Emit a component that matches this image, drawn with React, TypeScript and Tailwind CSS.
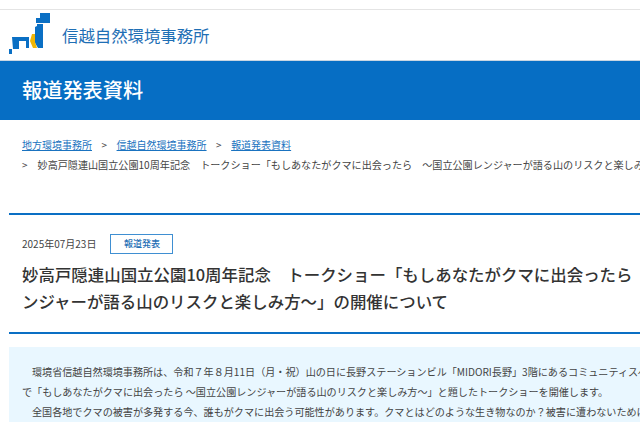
export default function App() {
  const font = { fontFamily: '"Noto Sans CJK JP", sans-serif' };
  return (
    <div className="w-[640px] h-[422px] overflow-hidden bg-white text-[#333333]" style={font}>
      <div className="h-[10px] border-b border-[#e4e4e4]" />
      <header className="h-[50px] flex items-center pl-[9px] gap-[11px]">
        <svg width="42" height="42" viewBox="0 0 42 42" className="mt-[-3px]">
          <path d="M31 0h10v10H27V5h4z" fill="#0a6fc4" />
          <path d="M28 11h6v24h-5l-3-5V14l2-1z" fill="#0a6fc4" />
          <path d="M23 21h3v8l2 6h-4l-3-7z" fill="#f2b705" />
          <path d="M3 24h17v11h-3v-7H10v8H4z" fill="#0a6fc4" />
          <path d="M0 36h3v5H0z" fill="#0a6fc4" />
        </svg>
        <div className="text-[16.4px] leading-none text-[#1f6fb5]">信越自然環境事務所</div>
      </header>
      <div className="h-[60px] bg-[#066ec4] flex items-center pl-[22px] border-t border-[#c9d6e2]">
        <h1 className="text-[20.2px] leading-none font-medium text-white">報道発表資料</h1>
      </div>
      <nav className="pl-[22px] pt-[15px] h-[93px] text-[10px] leading-[20px] whitespace-nowrap text-[#444444]">
        <div className="flex items-center">
          <span className="text-[#1a73c0] underline">地方環境事務所</span>
          <span className="mx-[9.5px]">&gt;</span>
          <span className="text-[#1a73c0] underline">信越自然環境事務所</span>
          <span className="mx-[9.5px]">&gt;</span>
          <span className="text-[#1a73c0] underline">報道発表資料</span>
        </div>
        <div className="flex items-center">
          <span className="mr-[10px]">&gt;</span>
          <span className="text-[10.1px]">妙高戸隠連山国立公園10周年記念　トークショー「もしあなたがクマに出会ったら　〜国立公園レンジャーが語る山のリスクと楽しみ方〜」の開催について</span>
        </div>
      </nav>
      <main className="ml-[9px] w-[800px]">
        <div className="border-t-[2px] border-[#0a6fc4] h-[2px]" />
        <div className="pl-[13px] pt-[19px] flex items-center gap-[14px]">
          <span className="text-[10px] leading-none text-[#444444]">2025年07月23日</span>
          <span className="w-[63px] h-[20px] border border-[#3f8fd2] flex items-center justify-center text-[9px] font-medium text-[#1f6fb5]">報道発表</span>
        </div>
        <h2 className="pl-[13px] pt-[7px] text-[16.45px] leading-[27px] font-medium text-[#333333] whitespace-nowrap">
          <div>妙高戸隠連山国立公園10周年記念　トークショー「もしあなたがクマに出会ったら　〜国立公園レ</div>
          <div>ンジャーが語る山のリスクと楽しみ方〜」の開催について</div>
        </h2>
        <div className="mt-[17px] border-t-[2px] border-[#0a6fc4]" />
        <section className="mt-[13px] bg-[#e9f7ff] pt-[15px] pl-[13px] h-[100px] text-[10.1px] leading-[20px] whitespace-nowrap text-[#444444]">
          <p className="pl-[10px]">環境省信越自然環境事務所は、令和７年８月11日（月・祝）山の日に長野ステーションビル「MIDORI長野」3階にあるコミュニティスペース</p>
          <p>で「もしあなたがクマに出会ったら 〜国立公園レンジャーが語る山のリスクと楽しみ方〜」と題したトークショーを開催します。</p>
          <p className="pl-[10px]">全国各地でクマの被害が多発する今、誰もがクマに出会う可能性があります。クマとはどのような生き物なのか？被害に遭わないためには</p>
        </section>
      </main>
    </div>
  );
}
